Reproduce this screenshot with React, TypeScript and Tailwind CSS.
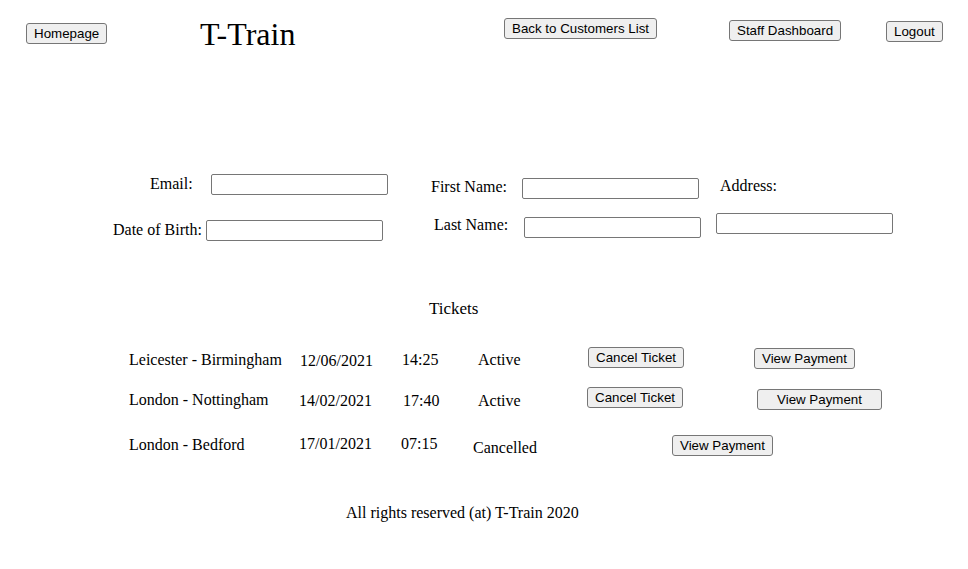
import React from "react";

const btn =
  "block h-[21px] px-[7px] border border-[#767676] bg-[#efefef] rounded-[3px] text-[13.333px] leading-[15px] text-black [font-family:'Liberation_Sans',Arial,sans-serif] whitespace-nowrap";
const input =
  "block w-[177px] h-[21px] border border-[#767676] rounded-[2px] bg-white";
const lbl = "block text-[16px] leading-[18px] whitespace-nowrap";

export default function App() {
  return (
    <div className="w-[968px] h-[569px] bg-white text-black [font-family:'Liberation_Serif','Times_New_Roman',serif] flex flex-col">
      {/* Header */}
      <div className="flex items-start h-[60px]">
        <div className="w-[200px] pl-[26px] pt-[23px]">
          <button className={btn}>Homepage</button>
        </div>
        <div className="w-[304px] pt-[16px]">
          <div className="text-[32px] leading-[37px] whitespace-nowrap">T-Train</div>
        </div>
        <div className="w-[225px] pt-[18px]">
          <button className={btn}>Back to Customers List</button>
        </div>
        <div className="w-[157px] pt-[20px]">
          <button className={btn}>Staff Dashboard</button>
        </div>
        <div className="pt-[21px]">
          <button className={btn}>Logout</button>
        </div>
      </div>

      {/* Form */}
      <div className="flex items-start mt-[114px]">
        <div className="w-[410px] flex flex-col">
          <div className="flex items-start pl-[150px]">
            <span className={`${lbl} mt-[1px]`}>Email:</span>
            <input className={`${input} ml-[18px]`} />
          </div>
          <div className="flex items-start pl-[113px] mt-[25px]">
            <span className={`${lbl} mt-[1px]`}>Date of Birth:</span>
            <input className={`${input} ml-[4px]`} />
          </div>
        </div>
        <div className="w-[306px] flex flex-col">
          <div className="flex items-start pl-[21px]">
            <span className={`${lbl} mt-[4px]`}>First Name:</span>
            <input className={`${input} ml-[15px] mt-[4px]`} />
          </div>
          <div className="flex items-start pl-[24px] mt-[16px]">
            <span className={`${lbl} mt-[1px]`}>Last Name:</span>
            <input className={`${input} ml-[16px] mt-[2px]`} />
          </div>
        </div>
        <div className="flex flex-col">
          <span className={`${lbl} mt-[3px] ml-[4px]`}>Address:</span>
          <input className={`${input} mt-[18px]`} />
        </div>
      </div>

      {/* Tickets */}
      <div className="pl-[429px] mt-[58px] text-[17px] leading-[20px]">Tickets</div>

      {/* Row 1 */}
      <div className="flex items-start pl-[129px] mt-[28px]">
        <div className={`w-[171px] mt-[4px] ${lbl}`}>Leicester - Birmingham</div>
        <div className={`w-[102px] mt-[5px] ${lbl}`}>12/06/2021</div>
        <div className={`w-[76px] mt-[4px] ${lbl}`}>14:25</div>
        <div className={`w-[110px] mt-[4px] ${lbl}`}>Active</div>
        <div className="w-[166px]">
          <button className={btn}>Cancel Ticket</button>
        </div>
        <div className="mt-[1px]">
          <button className={btn}>View Payment</button>
        </div>
      </div>

      {/* Row 2 */}
      <div className="flex items-start pl-[129px] mt-[17px]">
        <div className={`w-[170px] mt-[4px] ${lbl}`}>London - Nottingham</div>
        <div className={`w-[104px] mt-[5px] ${lbl}`}>14/02/2021</div>
        <div className={`w-[75px] mt-[5px] ${lbl}`}>17:40</div>
        <div className={`w-[109px] mt-[5px] ${lbl}`}>Active</div>
        <div className="w-[170px]">
          <button className={btn}>Cancel Ticket</button>
        </div>
        <div className="mt-[2px]">
          <button className={`${btn} w-[125px]`}>View Payment</button>
        </div>
      </div>

      {/* Row 3 */}
      <div className="flex items-start pl-[129px] mt-[24px]">
        <div className={`w-[170px] mt-[2px] ${lbl}`}>London - Bedford</div>
        <div className={`w-[102px] mt-[1px] ${lbl}`}>17/01/2021</div>
        <div className={`w-[72px] mt-[1px] ${lbl}`}>07:15</div>
        <div className={`w-[199px] mt-[5px] ${lbl}`}>Cancelled</div>
        <div className="mt-[1px]">
          <button className={btn}>View Payment</button>
        </div>
      </div>

      {/* Footer */}
      <div className={`pl-[346px] mt-[47px] ${lbl}`}>All rights reserved (at) T-Train 2020</div>
    </div>
  );
}
